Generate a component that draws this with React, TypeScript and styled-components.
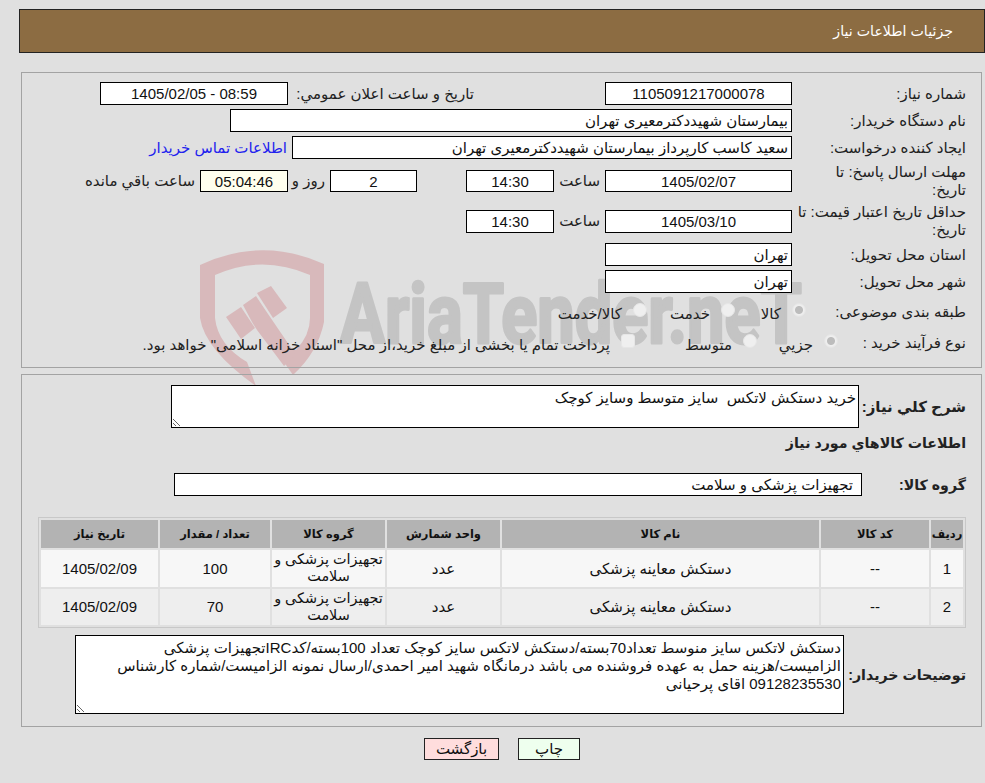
import styled, { createGlobalStyle } from 'styled-components';

const GlobalStyle = createGlobalStyle`
  html, body {
    margin: 0;
    padding: 0;
    background: #e0e0e0;
  }
  body {
    font-family: "Liberation Sans", "DejaVu Sans", sans-serif;
    font-size: 15px;
    color: #111;
  }
`;

const Page = styled.div`
  position: relative;
  width: 985px;
  height: 783px;
  box-sizing: border-box;
  padding: 9px 0 0 19px;
  direction: rtl;
  overflow: hidden;
`;

const Watermark = styled.svg`
  position: absolute;
  left: 0;
  top: 0;
  z-index: 0;
`;

const Content = styled.div`
  position: relative;
  z-index: 1;
`;

const Header = styled.div`
  height: 42px;
  line-height: 42px;
  border: 1px solid #222;
  background: #8c6c42;
  color: #fff;
  padding-right: 31px;
  font-size: 14.2px;
`;

const Panel = styled.div<{ $top: number; $h: number }>`
  box-sizing: border-box;
  height: ${(p) => p.$h}px;
  margin: ${(p) => p.$top}px 3px 0 2px;
  border: 1px solid #a3a3a3;
  padding: 9px 15px 0 0;
`;

const Rows = styled.div`
  display: flex;
  flex-direction: column;
  gap: 4px;
`;

const Row = styled.div<{ $h?: number }>`
  display: flex;
  align-items: center;
  height: ${(p) => p.$h ?? 23}px;
`;

const Label = styled.div<{ $w?: number }>`
  flex: none;
  width: ${(p) => p.$w ?? 174}px;
  box-sizing: border-box;
  line-height: 18px;
  white-space: nowrap;
  color: #222;
`;

const Field = styled.input<{ $w: number; $align?: string; $h?: number; $tint?: string; $inset?: number }>`
  flex: none;
  box-sizing: border-box;
  width: ${(p) => p.$w}px;
  height: ${(p) => p.$h ?? 23}px;
  border: 1px solid #000;
  border-radius: 0;
  outline: none;
  margin: 0;
  padding: 0 ${(p) => p.$inset ?? 3}px;
  background: ${(p) => p.$tint ?? '#fff'};
  color: #111;
  font: inherit;
  text-align: ${(p) => p.$align ?? 'center'};
`;

const Caption = styled.span<{ $w?: number; $pad?: number }>`
  flex: none;
  box-sizing: border-box;
  width: ${(p) => (p.$w ? `${p.$w}px` : 'auto')};
  padding-right: ${(p) => p.$pad ?? 5}px;
  color: #222;
`;

const ContactLink = styled.a`
  padding-right: 5px;
  color: #2222ee;
  text-decoration: none;
`;

const Option = styled.label<{ $w?: number }>`
  flex: none;
  display: flex;
  align-items: center;
  gap: 11px;
  width: ${(p) => (p.$w ? `${p.$w}px` : 'auto')};
  padding-top: 3px;
  color: #222;
`;

const Radio = styled.span<{ $checked?: boolean; $square?: boolean }>`
  flex: none;
  box-sizing: border-box;
  width: 14px;
  height: 14px;
  margin-top: -7px;
  border: 1px solid #e6e6e6;
  border-radius: ${(p) => (p.$square ? '3px' : '50%')};
  background: ${(p) =>
    p.$checked
      ? 'radial-gradient(circle, #bcbcbc 0 3.5px, #efefef 4.5px, #e6e6e6 100%)'
      : '#efefef'};
`;

const BoldLabel = styled.div<{ $w: number; $size?: number }>`
  flex: none;
  width: ${(p) => p.$w}px;
  box-sizing: border-box;
  white-space: nowrap;
  font-weight: bold;
  font-size: ${(p) => p.$size ?? 14.2}px;
  color: #222;
`;

const Note = styled.textarea<{ $w: number; $h: number }>`
  display: block;
  box-sizing: border-box;
  flex: none;
  width: ${(p) => p.$w}px;
  height: ${(p) => p.$h}px;
  margin: 0;
  padding: 3px 2px;
  border: 1px solid #000;
  border-radius: 0;
  outline: none;
  background: #fff;
  color: #111;
  font: inherit;
  line-height: 18px;
`;

const Section = styled.div<{ $top?: number; $h?: number }>`
  display: flex;
  align-items: center;
  margin-top: ${(p) => p.$top ?? 0}px;
  height: ${(p) => (p.$h ? `${p.$h}px` : 'auto')};
`;

const ItemsTable = styled.table`
  margin-top: 21px;
  width: 928px;
  table-layout: fixed;
  border-collapse: separate;
  border-spacing: 2px;
  border: 1px solid #c8c8c8;
  background: #e0e0e0;
`;

const Th = styled.th<{ $w: number }>`
  width: ${(p) => p.$w}px;
  height: 28px;
  padding: 0;
  background: #b3b3b3;
  color: #111;
  font-size: 11.5px;
  font-weight: bold;
`;

const Td = styled.td<{ $alt?: boolean; $tight?: boolean }>`
  height: 36.5px;
  padding: 0;
  background: ${(p) => (p.$alt ? '#eeeeee' : '#f7f7f7')};
  text-align: center;
  line-height: 17px;
  font-size: ${(p) => (p.$tight ? '14.4px' : 'inherit')};
  white-space: nowrap;
`;

const Actions = styled.div`
  display: flex;
  justify-content: center;
  gap: 19px;
  margin-top: 11px;
`;

const ActionButton = styled.button<{ $bg: string; $w: number }>`
  box-sizing: border-box;
  width: ${(p) => p.$w}px;
  height: 22px;
  padding: 0;
  border: 1px solid #222;
  background: ${(p) => p.$bg};
  color: #111;
  font: inherit;
`;

const COLUMNS = [
  { title: 'ردیف', w: 32 },
  { title: 'کد کالا', w: 108 },
  { title: 'نام کالا', w: 317 },
  { title: 'واحد شمارش', w: 113 },
  { title: 'گروه کالا', w: 113 },
  { title: 'تعداد / مقدار', w: 110 },
  { title: 'تاریخ نیاز', w: 117 },
];

const ITEMS = [
  { id: 1, qty: 100 },
  { id: 2, qty: 70 },
];

const BUYER_NOTE = [
  'دستکش لاتکس سایز منوسط تعداد70بسته/دستکش لاتکس سایز کوچک تعداد 100بسته/کدIRCتجهیزات پزشکی',
  'الزامیست/هزینه حمل به عهده فروشنده می باشد درمانگاه شهید امیر احمدی/ارسال نمونه الزامیست/شماره کارشناس',
  '09128235530 اقای پرحیانی',
].join('\n');

function App() {
  return (
    <Page>
      <GlobalStyle />
      <Watermark width="985" height="783" viewBox="0 0 985 783">
        <path
          fill="#d8b9bb"
          fillRule="evenodd"
          d="M200 265Q262 236 324 264V322Q318 352 293 375L272 345L296 350Q310 335 310 318V275Q262 254 215 275V318Q218 345 247 362L256 386Q205 350 200 318Z"
        />
        <path fill="#d8b9bb" d="M226 317L241 307L255 328L241 339Z" />
        <path fill="#d8b9bb" d="M243 305L256 296L266 311L296 355L284 366L257 330L252 322Z" />
        <path fill="#d8b9bb" d="M257 293L271 286L287 308L273 318Z" />
        <text
          x="340"
          y="343"
          fill="#c4c4c4"
          stroke="#c4c4c4"
          strokeWidth="3"
          strokeLinejoin="round"
          fontFamily="Roboto, sans-serif"
          fontWeight="bold"
          fontSize="84"
          textLength="462"
          lengthAdjust="spacingAndGlyphs"
          direction="ltr"
        >
          AriaTender.neT
        </text>
      </Watermark>

      <Content>
        <Header>جزئیات اطلاعات نیاز</Header>

        <Panel $top={19} $h={296}>
          <Rows>
            <Row>
              <Label>شماره نیاز:</Label>
              <Field $w={187} readOnly value="1105091217000078" />
              <Caption $w={317} $pad={131}>تاریخ و ساعت اعلان عمومي:</Caption>
              <Field $w={188} readOnly value="08:59 - 1405/02/05" />
            </Row>
            <Row>
              <Label>نام دستگاه خریدار:</Label>
              <Field $w={562} $align="right" readOnly value="بیمارستان شهیددکترمعیری تهران" />
            </Row>
            <Row>
              <Label>ایجاد کننده درخواست:</Label>
              <Field $w={500} $align="right" readOnly value="سعید کاسب کارپرداز بیمارستان شهیددکترمعیری تهران" />
              <ContactLink href="#">اطلاعات تماس خریدار</ContactLink>
            </Row>
            <Row $h={36}>
              <Label>مهلت ارسال پاسخ: تا<br />تاریخ:</Label>
              <Field $w={187} $h={22} readOnly value="1405/02/07" />
              <Caption $w={51}>ساعت</Caption>
              <Field $w={88} $h={22} readOnly value="14:30" />
              <Caption $w={49} />
              <Field $w={87} $h={22} readOnly value="2" />
              <Caption $w={42}>روز و</Caption>
              <Field $w={88} $h={22} $tint="#ffffee" readOnly value="05:04:46" />
              <Caption>ساعت باقي مانده</Caption>
            </Row>
            <Row $h={36}>
              <Label>حداقل تاریخ اعتبار قیمت: تا<br />تاریخ:</Label>
              <Field $w={187} readOnly value="1405/03/10" />
              <Caption $w={51}>ساعت</Caption>
              <Field $w={88} readOnly value="14:30" />
            </Row>
            <Row>
              <Label>استان محل تحویل:</Label>
              <Field $w={187} $align="right" readOnly value="تهران" />
            </Row>
            <Row>
              <Label>شهر محل تحویل:</Label>
              <Field $w={187} $align="right" readOnly value="تهران" />
            </Row>
            <Row $h={30}>
              <Label $w={160}>طبقه بندی موضوعی:</Label>
              <Option $w={71}><Radio $checked />کالا</Option>
              <Option $w={88}><Radio />خدمت</Option>
              <Option><Radio />کالا/خدمت</Option>
            </Row>
            <Row $h={24}>
              <Label $w={128}>نوع فرآیند خرید :</Label>
              <Option $w={81}><Radio $checked />جزيي</Option>
              <Option $w={122}><Radio />متوسط</Option>
              <Option>
                <Radio $square />
                پرداخت تمام یا بخشی از مبلغ خرید،از محل "اسناد خزانه اسلامی" خواهد بود.
              </Option>
            </Row>
          </Rows>
        </Panel>

        <Panel $top={6} $h={353}>
          <Section $top={1}>
            <BoldLabel $w={107} $size={15}>شرح كلي نياز:</BoldLabel>
            <Note $w={688} $h={43} readOnly value="خرید دستکش لاتکس  سایز متوسط وسایز کوچک" />
          </Section>
          <Section $top={3} $h={24}>
            <BoldLabel $w={300}>اطلاعات کالاهاي مورد نياز</BoldLabel>
          </Section>
          <Section $top={18}>
            <BoldLabel $w={104}>گروه کالا:</BoldLabel>
            <Field $w={688} $align="right" $inset={8} readOnly value="تجهیزات پزشکی و سلامت" />
          </Section>
          <ItemsTable>
            <thead>
              <tr>
                {COLUMNS.map((col) => (
                  <Th key={col.title} $w={col.w}>{col.title}</Th>
                ))}
              </tr>
            </thead>
            <tbody>
              {ITEMS.map((item, i) => (
                <tr key={item.id}>
                  <Td $alt={i === 1}>{item.id}</Td>
                  <Td $alt={i === 1}>--</Td>
                  <Td $alt={i === 1}>دستکش معاینه پزشکی</Td>
                  <Td $alt={i === 1}>عدد</Td>
                  <Td $alt={i === 1} $tight>تجهیزات پزشکی و<br />سلامت</Td>
                  <Td $alt={i === 1}>{item.qty}</Td>
                  <Td $alt={i === 1}>1405/02/09</Td>
                </tr>
              ))}
            </tbody>
          </ItemsTable>
          <Section $top={7}>
            <BoldLabel $w={122}>توضیحات خریدار:</BoldLabel>
            <Note $w={769} $h={79} readOnly value={BUYER_NOTE} />
          </Section>
        </Panel>

        <Actions>
          <ActionButton $bg="#eeffee" $w={62}>چاپ</ActionButton>
          <ActionButton $bg="#ffdddd" $w={75}>بازگشت</ActionButton>
        </Actions>
      </Content>
    </Page>
  );
}

export default App;
